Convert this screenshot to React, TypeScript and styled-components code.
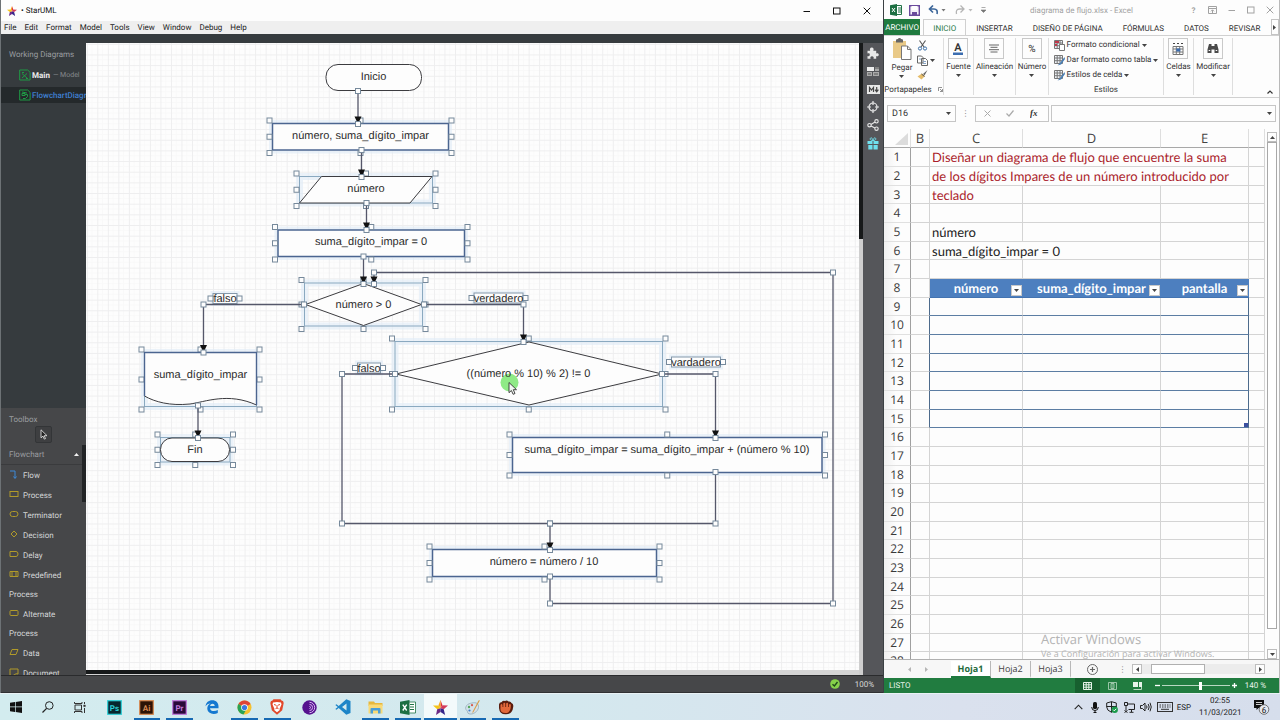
import React from "react";
import styled, { createGlobalStyle } from "styled-components";

const ui = `Roboto, "Open Sans", "Noto Sans", sans-serif`;
const humanist = `"Open Sans", "Noto Sans", sans-serif`;
const calibri = `Lato, "Liberation Sans", sans-serif`;

const GlobalStyle = createGlobalStyle`
  * { box-sizing: border-box; }
  body { margin: 0; font-family: ${ui}; font-size: 8px; color: #333; background: #d8e6ee; text-rendering: geometricPrecision; }
  button, input { font: inherit; color: inherit; text-rendering: inherit; padding: 0; margin: 0; border: 0; background: none; }
  svg { display: block; flex: none; }
  ul { list-style: none; margin: 0; padding: 0; }
`;

const Desktop = styled.div`
  display: grid;
  grid-template-rows: minmax(0, 1fr) 27px;
  height: 100vh;
  min-height: 480px;
`;

const Workspace = styled.main`
  display: grid;
  grid-template-columns: minmax(0, 1fr) 396px;
  min-height: 0;
`;

/* ---------- StarUML ---------- */

const UmlWindow = styled.section`
  display: flex;
  flex-direction: column;
  min-width: 0;
  min-height: 0;
  border-left: 1px solid #6d7275;
  border-right: 1px solid #3b4043;
  background: #363b3e;
`;

const TitleBar = styled.header`
  display: flex;
  align-items: center;
  height: 21px;
  padding: 0 1px 0 6px;
  background: #fdfdfd;
  color: #111;
`;

const TitleText = styled.h1`
  flex: 1;
  margin: 0 0 0 4px;
  font-size: 8px;
  font-weight: 400;
`;

const WindowButton = styled.button`
  display: grid;
  place-items: center;
  width: 30px;
  height: 20px;
`;

const MenuBar = styled.nav`
  display: flex;
  align-items: center;
  gap: 8px;
  height: 13px;
  padding-left: 3px;
  background: #efefef;
  color: #222;
`;

const MenuItem = styled.button`
  line-height: 12px;
`;

const UmlBody = styled.div`
  display: grid;
  grid-template-columns: 85px minmax(0, 1fr) 20px;
  flex: 1;
  min-height: 0;
  padding-top: 9px;
`;

const Sidebar = styled.aside`
  display: flex;
  flex-direction: column;
  min-height: 0;
  overflow: hidden;
  color: #d4d6d8;
`;

const Diagrams = styled.section`
  flex: 1;
  padding-top: 4px;
`;

const PanelTitle = styled.h2<{ $line: number }>`
  margin: 0;
  padding-left: 8px;
  font-size: 8px;
  font-weight: 400;
  line-height: ${(p) => p.$line}px;
  color: #9a9da0;
`;

const DiagramRow = styled.button<{ $active?: boolean }>`
  display: flex;
  align-items: center;
  gap: 1px;
  width: 100%;
  height: 16px;
  margin-top: 4px;
  padding-left: 18px;
  white-space: nowrap;
  font-weight: 500;
  background: ${(p) => (p.$active ? "#24292b" : "transparent")};
  color: ${(p) => (p.$active ? "#3f7fd0" : "#ededed")};

  small { margin-left: 2px; font-size: 7px; font-weight: 400; color: #85898c; }
`;

const Toolbox = styled.section`
  display: flex;
  flex-direction: column;
  height: 267px;
  padding-top: 6px;
  background: #464749;
  overflow: hidden;
`;

const SelectButton = styled.button`
  display: grid;
  place-items: center;
  flex: none;
  width: 17px;
  height: 17px;
  margin: 0 0 2px 34px;
  border: 1px solid #333537;
  border-radius: 2px;
  background: #3e3f41;
`;

const GroupHeader = styled.button`
  display: flex;
  align-items: center;
  justify-content: space-between;
  width: 100%;
  height: 20px;
  padding: 0 3px 0 8px;
  border-bottom: 1px solid #3a3b3d;
  color: #9a9da0;
`;

const ToolScroll = styled.div`
  display: flex;
  flex: 1;
  min-height: 0;
`;

const ToolGroup = styled.div`
  flex: 1;
`;

const ToolList = styled.ul`
  width: 72px;
  padding: 1px 0 0 8px;
`;

const ToolItem = styled.li`
  margin-bottom: 1px;
`;

const Tool = styled.button`
  text-align: left;
  line-height: 19px;

  svg { display: inline-block; margin-right: 4px; vertical-align: -1px; }
`;

const ToolThumb = styled.div`
  width: 4px;
  height: 57px;
  background: #222426;
`;

const CanvasPane = styled.div`
  display: grid;
  grid-template-columns: minmax(0, 1fr) 4px;
  grid-template-rows: minmax(0, 1fr) 5px;
  min-height: 0;
`;

const Canvas = styled.div`
  position: relative;
  overflow: hidden;
  background: #fdfdfd;

  > svg { position: absolute; top: 0; left: 0; }
`;

const VScroll = styled.div`
  grid-row: span 2;
  background: #cfcfcf;
  &::before { content: ""; display: block; height: 31%; background: #17191a; }
`;

const HScroll = styled.div`
  background: #d4d4d4;
  &::before { content: ""; display: block; height: 4px; width: 29%; background: #17191a; }
`;

const RightTools = styled.aside`
  display: flex;
  flex-direction: column;
  align-items: center;
  gap: 4px;
  padding-top: 3px;
  background: #55565a;
`;

const SideButton = styled.button`
  display: grid;
  place-items: center;
  width: 16px;
  height: 14px;
`;

const UmlStatus = styled.footer`
  display: flex;
  align-items: center;
  justify-content: flex-end;
  gap: 15px;
  height: 18px;
  padding-right: 9px;
  border-top: 1px solid #2a2b2d;
  border-bottom: 1px solid #303133;
  background: #464749;
  color: #d8d8d8;
`;

/* ---------- Excel ---------- */

const XlWindow = styled.section`
  display: flex;
  flex-direction: column;
  min-height: 0;
  overflow: hidden;
  border-right: 1px solid #b9b9b9;
  background: #fdfdfd;
`;

const XlTitle = styled.header`
  display: flex;
  align-items: center;
  height: 19px;
  padding: 1px 0 0 6px;
  color: #a2a2a2;
`;

const QuickButton = styled.button<{ $w?: number }>`
  display: grid;
  place-items: center start;
  width: ${(p) => p.$w ?? 19}px;
  height: 16px;
`;

const XlName = styled.h1`
  flex: 1;
  margin: 0;
  padding-right: 10px;
  text-align: center;
  font-size: 8px;
  font-weight: 400;
`;

const XlWinButton = styled.button`
  display: grid;
  place-items: center;
  width: 19px;
  height: 16px;
`;

const TabRow = styled.nav`
  display: flex;
  height: 17px;
  border-bottom: 1px solid #d0d0d0;
  overflow: hidden;
`;

const FileTab = styled.button`
  width: 39px;
  background: #1f7a3f;
  color: #fff;
`;

const RibbonTab = styled.button<{ $active?: boolean }>`
  height: 17px;
  padding: 0 9px;
  white-space: nowrap;
  color: ${(p) => (p.$active ? "#2a7a4b" : "#333")};
  border: 1px solid ${(p) => (p.$active ? "#d0d0d0" : "transparent")};
  border-bottom: 0;
  margin-left: ${(p) => (p.$active ? 3 : 0)}px;
`;

const TabArrow = styled.button`
  display: grid;
  place-items: center;
  width: 9px;
  height: 16px;
  margin-left: auto;
  border: 1px solid #c4c4c4;
`;

const Ribbon = styled.div`
  display: flex;
  height: 62px;
  border-bottom: 1px solid #d0d0d0;
  color: #333;
`;

const RibbonGroup = styled.section<{ $w: number }>`
  display: flex;
  flex-direction: column;
  align-items: center;
  width: ${(p) => p.$w}px;
  margin: 2px 0;
  border-right: 1px solid #dedede;
`;

const GroupTitle = styled.h2`
  display: flex;
  align-items: center;
  justify-content: center;
  gap: 6px;
  margin: auto 0 0;
  font-size: 8px;
  font-weight: 400;
  line-height: 11px;
`;

const GroupBody = styled.div`
  display: flex;
  gap: 5px;
`;

const BigButton = styled.button`
  display: flex;
  flex-direction: column;
  align-items: center;
  line-height: 15px;
`;

const IconBox = styled.span`
  display: grid;
  place-items: center;
  width: 20px;
  height: 21px;
  border: 1px solid #c9c9c9;
`;

const SmallColumn = styled.div`
  display: flex;
  flex-direction: column;
  gap: 3px;
  padding-top: 1px;
`;

const SmallButton = styled.button`
  display: flex;
  align-items: center;
  gap: 2px;
  height: 12px;
  line-height: 12px;
  white-space: nowrap;
`;

const Collapse = styled.button`
  align-self: flex-end;
  margin: 0 6px 3px auto;
`;

const FormulaBar = styled.div`
  display: flex;
  align-items: center;
  height: 31px;
  padding: 0 3px;
`;

const NameBox = styled.label`
  display: flex;
  align-items: center;
  width: 69px;
  height: 17px;
  padding: 0 4px;
  border: 1px solid #c6c6c6;
  font-size: 9px;

  input { flex: 1; min-width: 0; outline: 0; }
`;

const Dots = styled.span`
  width: 19px;
  text-align: center;
  color: #888;
`;

const FormulaTools = styled.div`
  display: flex;
  align-items: center;
  justify-content: space-around;
  width: 74px;
  height: 17px;
  margin-right: 2px;
  border: 1px solid #c6c6c6;
`;

const FormulaInput = styled.label`
  display: flex;
  align-items: center;
  flex: 1;
  height: 17px;
  padding-right: 3px;
  border: 1px solid #c6c6c6;

  input { flex: 1; min-width: 0; outline: 0; }
`;

const SheetArea = styled.div`
  position: relative;
  display: flex;
  flex: 1;
  min-height: 0;
`;

const SheetClip = styled.div`
  width: 381px;
  overflow: hidden;
`;

const Sheet = styled.table`
  width: 100%;
  table-layout: fixed;
  border-collapse: separate;
  border-spacing: 0;
  font-family: ${calibri};
  font-size: 13px;

  tr { height: 19px; }
  tbody tr:nth-child(3n) { height: 18px; }
  th, td { padding: 0; line-height: 16px; }
  thead th {
    border-right: 1px solid #dedede;
    border-bottom: 1px solid #a8a8a8;
    font-family: ${humanist};
    font-weight: 400;
    color: #444;
  }
  tbody th {
    border-right: 1px solid #a0a0a0;
    border-bottom: 1px solid #e0e0e0;
    background: linear-gradient(90deg, #f0f0f0, #fdfdfd 12px);
    font-family: ${humanist};
    font-size: 12px;
    font-weight: 400;
    color: #3a3a3a;
  }
`;

const Cell = styled.td<{ $tone?: "red"; $table?: boolean; $edge?: boolean; $corner?: boolean }>`
  border-right: 1px solid ${(p) => (p.$edge ? "#4d6b8c" : "#d4d4d4")};
  border-bottom: 1px solid ${(p) => (p.$table ? "#5c7da3" : "#d4d4d4")};
  background: ${(p) => (p.$corner ? "linear-gradient(#3a4fa0, #3a4fa0) right bottom / 4px 4px no-repeat" : "none")};
  color: ${(p) => (p.$tone === "red" ? "#ab1d2c" : "#222")};
  white-space: nowrap;
  overflow: hidden;

  > span { padding-left: 2px; }
`;

const HeadCell = styled.td`
  background: #4d7fbf;
  border-bottom: 1px solid #4373b0;
  color: #fff;
  font-weight: 700;
  text-align: center;

  > div { display: flex; align-items: center; justify-content: flex-end; gap: 2px; padding-left: 13px; }
  > div > span { flex: 1; white-space: nowrap; }
`;

const FilterButton = styled.button`
  display: grid;
  place-items: center;
  width: 11px;
  height: 11px;
  margin: 4px 1px 0 0;
  border: 1px solid #c8c8c8;
  background: #fff;
`;

const SheetScroll = styled.div`
  display: flex;
  flex-direction: column;
  flex: 1;
  padding: 3px 1px 0 2px;
`;

const ArrowButton = styled.button`
  display: grid;
  place-items: center;
  width: 10px;
  height: 10px;
  border: 1px solid #bdbdbd;
  background: #fdfdfd;
`;

const VThumb = styled.div`
  width: 10px;
  flex: 1;
  margin-bottom: 20px;
  border: 1px solid #a8a8a8;
  background: #fff;
`;

const Watermark = styled.div`
  position: absolute;
  left: 157px;
  bottom: 0;
  color: #b4b4b4;
  font-family: ${humanist};
  pointer-events: none;

  strong { display: block; font-size: 13px; font-weight: 400; line-height: 18px; }
  span { display: block; font-size: 9px; line-height: 11px; white-space: nowrap; }
`;

const SheetTabs = styled.nav`
  display: flex;
  align-items: center;
  height: 19px;
  padding-right: 14px;
  border-top: 1px solid #b0b0b0;
  background: #f7f7f7;
`;

const SheetNav = styled.div`
  display: flex;
  justify-content: center;
  gap: 14px;
  width: 67px;
  color: #aaa;
`;

const SheetTab = styled.button<{ $active?: boolean }>`
  width: 40px;
  height: 17px;
  font-family: ${humanist};
  font-size: 9px;
  font-weight: ${(p) => (p.$active ? 700 : 400)};
  color: ${(p) => (p.$active ? "#1f6b3d" : "#444")};
  background: ${(p) => (p.$active ? "#fff" : "transparent")};
  border-right: 1px solid #b8b8b8;
  border-bottom: 2px solid ${(p) => (p.$active ? "#1f7a3f" : "transparent")};
`;

const AddSheet = styled.button`
  display: grid;
  place-items: center;
  flex: 1;
`;

const HTrack = styled.div`
  display: flex;
  flex: 0 0 113px;
  height: 10px;
  padding-left: 9px;
  background: #ececec;

  &::before { content: ""; width: 52px; border: 1px solid #b0b0b0; background: #fff; }
`;

const XlStatus = styled.footer`
  display: flex;
  align-items: center;
  height: 15px;
  padding: 0 13px 0 5px;
  background: #217c40;
  color: #e8f3ea;
`;

const StatusText = styled.span`
  flex: 1;
`;

const ViewButton = styled.button<{ $active?: boolean }>`
  display: grid;
  place-items: center;
  width: 25px;
  height: 15px;
  background: ${(p) => (p.$active ? "#17602f" : "transparent")};
`;

const ZoomControl = styled.div`
  display: flex;
  align-items: center;
  margin-left: 4px;
`;

const Zoom = styled.input`
  appearance: none;
  width: 68px;
  height: 10px;
  margin: 0 1px;
  background: linear-gradient(#b9d8c2, #b9d8c2) center / 100% 1px no-repeat;

  &::-webkit-slider-thumb { appearance: none; width: 3px; height: 8px; background: #fff; }
`;

const ZoomValue = styled.output`
  width: 28px;
  text-align: right;
  white-space: nowrap;
`;

/* ---------- Taskbar ---------- */

const TaskBar = styled.footer`
  display: flex;
  justify-content: space-between;
  border-top: 1px solid #e9f2f5;
  background: linear-gradient(90deg, #d3ecef, #d4e8ee 45%, #dae1ee 75%, #d6deec);
  color: #222;
`;

const TaskGroup = styled.div`
  display: flex;
`;

const StartGroup = styled.div`
  display: grid;
  grid-template-columns: repeat(3, 32px);
  margin-right: 2px;
`;

const AppGroup = styled.div`
  display: grid;
  grid-template-columns: repeat(13, minmax(0, 1fr));
  width: 424px;
`;

const TaskButton = styled.button<{ $open?: boolean; $active?: boolean }>`
  position: relative;
  display: grid;
  place-items: center;
  height: 26px;
  background: ${(p) => (p.$active ? "#f3fafb" : "transparent")};
  border: solid transparent;
  border-width: 0 ${(p) => (p.$active ? 0 : 3)}px;
  background-clip: padding-box;

  &::after {
    content: "";
    position: absolute;
    right: 0;
    bottom: 0;
    left: 0;
    height: 2px;
    background: ${(p) => (p.$open ? "#1669b3" : "transparent")};
  }
`;

const Tray = styled.div`
  display: flex;
  align-items: center;
  gap: 4px;
  padding-right: 10px;
`;

const TrayButton = styled.button`
  display: grid;
  place-items: center;
  height: 20px;
  min-width: 13px;
`;

const Clock = styled.button`
  width: 42px;
  margin: 0 8px 0 4px;
  line-height: 12px;
`;

/* ---------- Diagram ---------- */

const Label = styled.text`
  font-family: "Liberation Sans", Arial, sans-serif;
  font-size: 11px;
  fill: #2c2c2c;
  text-anchor: middle;
`;

const T = ({ x, y, children }: { x: number; y: number; children: React.ReactNode }) => (
  <Label x={x} y={y + 4}>{children}</Label>
);

const Handle = ({ x, y }: { x: number; y: number }) => (
  <rect x={x - 2.5} y={y - 2.5} width="5" height="5" fill="#fdfdfd" stroke="#76899b" strokeWidth="1" />
);

type Box = { x: number; y: number; w: number; h: number; mx?: number; solid?: boolean };

const Selection = ({ x, y, w, h, mx, solid }: Box) => {
  const cx = mx ?? x + w / 2;
  const cy = y + h / 2;
  const pts = [
    [x - 3, y - 3], [cx, y - 3], [x + w + 3, y - 3],
    [x - 3, cy], [x + w + 3, cy],
    [x - 3, y + h + 3], [cx, y + h + 3], [x + w + 3, y + h + 3],
  ];
  return (
    <g>
      <rect x={x} y={y} width={w} height={h} fill="none" stroke="#dfebf7" strokeOpacity="0.6" strokeWidth="7" />
      <rect x={x} y={y} width={w} height={h} fill={solid ? "#fdfdfd" : "none"} stroke={solid ? "#4b6590" : "#8aa9c0"} strokeWidth={solid ? 1.5 : 1} />
      {pts.map(([a, b], i) => <Handle key={i} x={a} y={b} />)}
    </g>
  );
};

const Flow = ({ pts, arrow = true }: { pts: [number, number][]; arrow?: boolean }) => {
  const [ex, ey] = pts[pts.length - 1];
  return (
    <g>
      <polyline points={pts.map((p) => p.join(",")).join(" ")} fill="none" stroke="#55576a" strokeWidth="1.3" strokeLinejoin="round" />
      {arrow && <path d={`M${ex - 3.5} ${ey - 7.5}h7L${ex} ${ey}z`} fill="#111" />}
      {pts.map(([a, b], i) => <Handle key={i} x={a} y={b} />)}
    </g>
  );
};

const EdgeLabel = ({ x, y, w, children }: { x: number; y: number; w: number; children: string }) => (
  <g>
    <rect x={x - w / 2} y={y - 5} width={w} height="10" fill="#fdfdfd" stroke="#dfebf7" strokeWidth="5" strokeOpacity="0.6" />
    <rect x={x - w / 2} y={y - 5} width={w} height="10" fill="#fdfdfd" stroke="#8497a9" />
    <Handle x={x - w / 2 - 2.5} y={y} />
    <Handle x={x + w / 2 + 2.5} y={y} />
    <T x={x} y={Math.floor(y)}>{children}</T>
  </g>
);

const ink = { fill: "#fdfdfd", stroke: "#3c3c40", strokeWidth: 1 };

const Flowchart = () => (
  <svg width="773" height="627" viewBox="86 43 773 627" role="img" aria-label="Flowchart">
    <Selection x={272.5} y={123.5} w={176} h={26.5} solid />
    <Selection x={299.5} y={176.5} w={133} h={26.5} />
    <path d="M321.5 176.5H432L410 203H299.5z" {...ink} />
    <Selection x={278} y={230} w={186.5} h={26.5} solid />
    <Selection x={304.5} y={283} w={118} h={43} mx={363.5} />
    <path d="M305.5 304.5 363.5 283.5 421.5 304.5 363.5 325.5z" {...ink} />
    <Selection x={144.5} y={352.5} w={112} h={54} />
    <path d="M144.5 352.5H256.5V405C228 392 205 402 190 404C170 406 155 402 144.5 396z" {...ink} />
    <path d="M144.5 396V352.5H256.5V405" fill="none" stroke="#4b6590" strokeWidth="1.4" />
    <Selection x={160.5} y={437.5} w={69.5} h={24.5} />
    <rect x="160.5" y="438" width="69" height="23.5" rx="11.5" {...ink} />
    <Selection x={395} y={341.5} w={267.5} h={65} />
    <path d="M396 374 529 342 662 374 529 405z" {...ink} />
    <Selection x={512.5} y={437.5} w={309.5} h={35} solid />
    <Selection x={432.5} y={549.5} w={224} h={27} solid />

    <rect x="326" y="64.5" width="95.5" height="26" rx="12" {...ink} />

    <EdgeLabel x={225} y={298.5} w={24}>falso</EdgeLabel>
    <EdgeLabel x={498.5} y={298} w={49}>verdadero</EdgeLabel>
    <EdgeLabel x={369} y={368} w={23}>falso</EdgeLabel>
    <EdgeLabel x={696} y={362} w={49}>vardadero</EdgeLabel>

    <Flow pts={[[358, 91], [358, 124]]} />
    <Flow pts={[[361.5, 150], [361.5, 177]]} />
    <Flow pts={[[366.5, 203], [366.5, 230]]} />
    <Flow pts={[[363.5, 256.5], [363.5, 284]]} />
    <Flow pts={[[304, 304.5], [203.5, 304.5], [203.5, 352.5]]} />
    <Flow pts={[[424, 304.5], [523.5, 304.5], [523.5, 342]]} />
    <Flow pts={[[198, 405.5], [198, 438]]} />
    <Flow pts={[[715.5, 472], [715.5, 523.5], [550, 523.5]]} arrow={false} />
    <Flow pts={[[395, 374], [342, 374], [342, 523.5], [550, 523.5], [550, 550]]} />
    <Flow pts={[[662, 374], [715.5, 374], [715.5, 438]]} />
    <Flow pts={[[550, 576.5], [550, 603.5], [833, 603.5], [833, 272.5], [374, 272.5], [374, 284]]} />

    <T x={373.5} y={76}>Inicio</T>
    <T x={360.5} y={135}>número, suma_dígito_impar</T>
    <T x={366} y={188}>número</T>
    <T x={371} y={241}>suma_dígito_impar = 0</T>
    <T x={363.5} y={304}>número &gt; 0</T>
    <T x={200.5} y={374}>suma_dígito_impar</T>
    <T x={195} y={449}>Fin</T>
    <T x={667} y={449}>suma_dígito_impar = suma_dígito_impar + (número % 10)</T>
    <T x={544} y={561}>número = número / 10</T>
    <circle cx="509.5" cy="382.5" r="9" fill="#8fea86" />
    <T x={528.5} y={373}>((número % 10) % 2) != 0</T>
    <path d="M509 382.5v10.2l2.4-2.2 1.7 3.8 1.9-.8-1.7-3.8h3.2z" fill="#f4f7f4" stroke="#333" strokeWidth="0.9" />
  </svg>
);

const GridLines = () => (
  <svg width="100%" height="100%" aria-hidden="true">
    <defs>
      <pattern id="grid" width="10.52" height="10.66" x="0.8" y="0.8" patternUnits="userSpaceOnUse">
        <path d="M5.3 0v10.66M0 5.3h10.52" stroke="#f9f9f9" fill="none" />
        <path d="M.5 0v10.66M0 .5h10.52" stroke="#eeeeef" fill="none" />
      </pattern>
    </defs>
    <rect width="100%" height="100%" fill="url(#grid)" />
  </svg>
);

/* ---------- Icons ---------- */

const Star = ({ size = 10 }: { size?: number }) => (
  <svg width={size} height={size} viewBox="0 0 20 20">
    <path d="M10 0 12.6 7 10 11z" fill="#e0303a" /><path d="M10 0 7.2 7.2 10 11z" fill="#f6a51c" />
    <path d="M0 7.3 7.2 7.2 10 11 5.6 12.2z" fill="#f5c518" /><path d="M20 7.3 12.6 7 10 11 14.3 12.2z" fill="#d23b5b" />
    <path d="M4 20 5.6 12.2 10 11V16z" fill="#6b2a86" /><path d="M16.2 20 14.3 12.2 10 11V16z" fill="#35268a" />
  </svg>
);

const Caret = ({ up, color = "#444" }: { up?: boolean; color?: string }) => (
  <svg width="5" height="3" viewBox="0 0 5 3"><path d={up ? "M0 3h5L2.5 0z" : "M0 0h5L2.5 3z"} fill={color} /></svg>
);

const SideCaret = ({ left, color = "#444" }: { left?: boolean; color?: string }) => (
  <svg width="3" height="5" viewBox="0 0 3 5"><path d={left ? "M3 0v5L0 2.5z" : "M0 0v5l3-2.5z"} fill={color} /></svg>
);

const WinGlyph = ({ kind }: { kind: "min" | "max" | "close" }) => (
  <svg width="8" height="8" viewBox="0 0 8 8" fill="none" stroke="currentColor">
    {kind === "min" && <path d="M.5 4.5h6.5" />}
    {kind === "max" && <rect x=".5" y="1" width="6.5" height="6" />}
    {kind === "close" && <path d="M.7.7l6.6 6.6M7.3.7.7 7.3" />}
  </svg>
);

const DiagramIcon = ({ flow }: { flow?: boolean }) => (
  <svg width="12" height="12" viewBox="0 0 12 12" fill="none" stroke="#1f9a45">
    <path d="M.7 1h8l2.4 2.4V11H.7z" />
    {flow ? <path d="M3 4.5h3v2H3zM6 5.5h2.5v2L6.5 9.5H4M3 3l5 1" /> : <path d="M3 4.5l5 4.5M8 4.5 3 9M3 3.5h2M7 9.5h2" />}
  </svg>
);

const toolShapes: Record<string, React.ReactNode> = {
  Flow: <path d="M1 1h5v7M4.5 6.5 6 8.5l1.5-2" stroke="#3d8ad8" />,
  Process: <rect x="1" y="1.5" width="8" height="5" />,
  Terminator: <rect x="1" y="1.5" width="8" height="5" rx="2.5" />,
  Decision: <path d="M5 1 8 4 5 7 2 4z" />,
  Delay: <path d="M1 1.500h6q2 0 2 2.500T7 6.500H1z" />,
  "Predefined Process": <path d="M1 1.500h8v5H1zM3 1.500v5M7 1.500v5" />,
  "Alternate Process": <rect x="1" y="1.5" width="8" height="5" rx="1" />,
  Data: <path d="M3 1.500h6L7 6.500H1z" />,
  Document: <path d="M1 1h8v5q-2-1-4 1T1 7z" />,
};

const sideIcons = [
  <svg width="12" height="12" viewBox="0 0 12 12"><path d="M.5 3.8h2.7C2.4 1.8 3.2.4 4.8.4s2.300 1.400 1.500 3.400h2.900v2.600c1.500-.7 2.600.1 2.600 1.400S10.700 9.700 9.200 9v2.700H6.500c.6-1.500 0-2.500-1.500-2.500s-2 1-1.400 2.500H.5V9c1.500.5 2.300-.1 2.300-1.300S1.900 6 .5 6.600z" fill="#e8e8e8" /></svg>,
  <svg width="12" height="9" viewBox="0 0 12 9"><path d="M0 0h7v4H0z" fill="#eee" /><path d="M8 0h4v4H8zM0 5h5v4H0zM6 5h6v4H6z" fill="#aaa" /><path d="M8 1h4M1 7h3M7 7h4" stroke="#555" /></svg>,
  <svg width="13" height="9" viewBox="0 0 13 9"><path d="M0 0h13v9H0z" fill="#e8e8e8" /><path d="M2.500 7V2.500l2 2.500 2-2.500V7M9.700 2v4.500M8 4.700l1.700 2 1.700-2" fill="none" stroke="#444" strokeWidth="1.200" /></svg>,
  <svg width="12" height="12" viewBox="0 0 12 12" fill="none" stroke="#e8e8e8" strokeWidth="1.200"><circle cx="6" cy="6" r="4" /><path d="M6 0v4M6 8v4M0 6h4M8 6h4" /></svg>,
  <svg width="12" height="12" viewBox="0 0 12 12" fill="none" stroke="#e8e8e8" strokeWidth="1.100"><circle cx="2.500" cy="6.200" r="1.700" /><circle cx="9.500" cy="2.300" r="1.700" /><circle cx="9.500" cy="9.700" r="1.700" /><path d="M4 5.400 8 3.100M4 7l4 2" /></svg>,
  <svg width="12" height="13" viewBox="0 0 12 13"><path d="M.5 4h5v3h-5zM6.500 4h5v3h-5zM1.300 8h4.200v4.500H1.300zM6.500 8h4.200v4.500H6.500z" fill="#6fe0ee" /><path d="M6 3.500C2 3.500 3 .5 4.500.9 5.500 1.200 6 3.500 6 3.500S6.500 1.200 7.500.9C9 .5 10 3.500 6 3.500z" fill="none" stroke="#6fe0ee" /></svg>,
];

const StylesIcon = ({ red }: { red?: boolean }) => (
  <svg width="11" height="11" viewBox="0 0 11 11">
    <path d="M.5.5h8v8h-8zM.5 3h8M.5 5.700h8M3.200.5v8M6 .5v8" fill="#eef2f7" stroke="#777" />
    {red ? <><path d="M1 1h4v2H1zM1 4h2v2H1z" fill="#c0384b" /><path d="M5.500 4.500h5v6h-5z" fill="#fff" stroke="#777" /></> : <path d="M10.500 2 6 8 3.500 10.500 7 9.500 11 4z" fill="#4a7fb5" />}
  </svg>
);

const CutIcon = () => (
  <svg width="11" height="11" viewBox="0 0 11 11" fill="none"><path d="M2.500.5 7 7M8.500.5 4 7" stroke="#555" strokeWidth="1.100" /><circle cx="3" cy="8.500" r="1.600" stroke="#3a6ea5" /><circle cx="8" cy="8.500" r="1.600" stroke="#3a6ea5" /></svg>
);
const CopyIcon = () => (
  <svg width="11" height="11" viewBox="0 0 11 11" fill="#fff" stroke="#666"><path d="M.5 1h4L6 2.500V8H.5zM4.500 3.500h4L10.500 5.500v5h-6z" /><path d="M6 6.500h3M6 8.500h3M2 4h2" stroke="#8aa6c6" /></svg>
);
const BrushIcon = () => (
  <svg width="11" height="10" viewBox="0 0 11 10"><path d="M10.500 0 6 4l1.500 1.500z" fill="#666" /><path d="M5 3.500 8 6 4.500 9.500.5 6.500z" fill="#e6bd6a" /><path d="M4.500 4 7.500 6.500" stroke="#555" /></svg>
);

/* ---------- Data ---------- */

const menus = ["File", "Edit", "Format", "Model", "Tools", "View", "Window", "Debug", "Help"];
const ribbonTabs = ["INSERTAR", "DISEÑO DE PÁGINA", "FÓRMULAS", "DATOS", "REVISAR"];

const square = (bg: string, fg: string, label: string) => (
  <svg width="15" height="15" viewBox="0 0 15 15">
    <rect x=".7" y=".7" width="13.600" height="13.600" fill={bg} stroke={fg} strokeWidth="1.200" />
    <text x="7.500" y="10.500" fontSize="8" fontWeight="700" fill={fg} textAnchor="middle">{label}</text>
  </svg>
);

type App = { name: string; icon: React.ReactNode; open?: boolean; active?: boolean };
const apps: App[] = [
  { name: "Photoshop", icon: square("#06262e", "#2fd0d8", "Ps") },
  { name: "Illustrator", open: true, icon: square("#2c1305", "#d98a52", "Ai") },
  { name: "Premiere", open: true, icon: square("#2a0a3a", "#c07bdc", "Pr") },
  { name: "Edge", icon: <svg width="14" height="14" viewBox="0 0 14 14"><path d="M.5 6.300C1 2.500 3.500.3 7.200.3c4 0 6.300 2.700 6.300 6.200v1.700H5c.2 3.300 4.800 3.600 7.800 1.900v2.800C9 15 2.500 14 2.300 8.600 2.200 6.200 3.600 4.300 5.500 3.500 3.300 3.500 1.500 4.600.5 6.300zM5.100 6h4.600c0-3.200-4.300-3-4.600 0z" fill="#1478d0" /></svg> },
  { name: "Chrome", open: true, icon: <svg width="15" height="15" viewBox="0 0 15 15"><circle cx="7.500" cy="7.500" r="7" fill="#f6c12f" /><path d="M7.500 7.500 1.400 4A7 7 0 0 1 13.600 4z" fill="#dd4436" /><path d="M7.500 7.500 1.400 4A7 7 0 0 0 6.500 14.400L9.500 9z" fill="#27a356" /><circle cx="7.500" cy="7.500" r="3.300" fill="#fff" /><circle cx="7.500" cy="7.500" r="2.600" fill="#3b78e0" /></svg> },
  { name: "Brave", open: true, icon: <svg width="14" height="16" viewBox="0 0 14 16"><path d="M3.500.3h7l1.300 1.400 1.200.2.700 2-1.500 7.300L7 15.700l-5.200-4.500L.3 3.900l.7-2 1.200-.2z" fill="#e2482b" /><path d="M3 3.500 7 3l4 .5.500 2-2 4.500.3 1L7 13.200 4.200 11l.3-1-2-4.500z" fill="#fff" /><path d="M4 5.500l2 .7M10 5.500l-2 .7M7 6v3M5.500 9.700 7 9l1.500.7" stroke="#e2482b" fill="none" /></svg> },
  { name: "Tor", icon: <svg width="15" height="15" viewBox="0 0 15 15"><circle cx="7.500" cy="7.500" r="7.200" fill="#56128f" /><path d="M7.500 2.300a5.200 5.200 0 0 1 0 10.400M7.500 4.400a3.100 3.100 0 0 1 0 6.200M7.500 6.500a1 1 0 0 1 0 2" fill="none" stroke="#d9b8f2" strokeWidth="1" /></svg> },
  { name: "Visual Studio Code", icon: <svg width="16" height="16" viewBox="0 0 16 16"><path d="M11.300.3 15.500 2v12l-4.200 1.700L3.700 9 1.500 10.700.3 10l2.500-2L.3 6l1.200-.7L3.700 7zM11.500 4.500 7 8l4.500 3.500z" fill="#1d85c8" fillRule="evenodd" /></svg> },
  { name: "Explorer", open: true, icon: <svg width="15" height="13" viewBox="0 0 15 13"><path d="M.5.500H6L7 2h7.500v3H.5z" fill="#e8b83c" /><path d="M.5 3.500h14v9H.5z" fill="#f9da77" /><path d="M2.500 12.500V8q0-1 1-1h8q1 0 1 1v4.500H10V9.500H5v3z" fill="#4a9ed8" /></svg> },
  { name: "Excel", open: true, icon: <svg width="16" height="15" viewBox="0 0 16 15"><path d="M8 2h7.500v11H8z" fill="#fff" stroke="#217346" strokeWidth=".8" /><path d="M10 4.500h4M10 7h4M10 9.500h4" stroke="#217346" /><path d="M0 1.700 9.500 0v15L0 13.300z" fill="#1d6f42" /><path d="M2.800 4.700 6.700 10.500M6.700 4.700 2.800 10.500" stroke="#fff" strokeWidth="1.400" /></svg> },
  { name: "StarUML", open: true, active: true, icon: <Star size={15} /> },
  { name: "Paint", open: true, icon: <svg width="16" height="15" viewBox="0 0 16 15"><path d="M7 3c4-1 7 .5 6.500 4.500S8 15 4 13.800c-2-.6-1-2.300-2.200-3.300S0 7.700 1.500 5.700 5 3.400 7 3z" fill="#d3e2ea" stroke="#8da5b2" strokeWidth=".7" /><circle cx="4" cy="7" r="1.200" fill="#57a85f" /><circle cx="7" cy="5.200" r="1.100" fill="#d8574a" /><circle cx="4.500" cy="10.500" r="1.100" fill="#4281cc" /><path d="M15 .3 8.500 12 7.500 13.500 7.700 11.500 13.500.5z" fill="#d99b45" /></svg> },
  { name: "Bandicam", open: true, icon: <svg width="16" height="15" viewBox="0 0 16 15"><path d="M1 4.500Q1.500 2 3.500 2.200 5 .3 7 1q2-1 3.500.5 2.300-.5 3 1.500 2.300 1 1.700 4-.7 7-7.200 7.300T1 8z" fill="#5a1d0e" /><path d="M2.500 5q1.200-2 2 0V7h.8V3.500q1.200-1.700 2 0V7h.8V3.500q1.300-1.700 2 0V7h.8V4.500q1.400-1.300 2 .5 0 8-5.500 8T2.500 8z" fill="#e2683a" /></svg> },
];

const Spreadsheet = () => (
  <Sheet>
    <colgroup>
      <col width="27" /><col width="19" /><col width="93" /><col width="138" /><col width="88" /><col />
    </colgroup>
    <thead>
      <tr>
        <th><svg width="26" height="18" viewBox="0 0 26 18"><path d="M24 4v12H11z" fill="#dcdcdc" /></svg></th>
        <th>B</th><th>C</th><th>D</th><th>E</th><th />
      </tr>
    </thead>
    <tbody>
      {Array.from({ length: 28 }, (_, i) => i + 1).map((n) => {
        const table = n >= 9 && n <= 15;
        let cells = <><Cell $table={table} /><Cell $table={table} /><Cell $table={table} $edge={table} $corner={n === 15} /></>;
        if (n === 1) cells = <Cell colSpan={3} $tone="red"><span>Diseñar un diagrama de flujo que encuentre la suma</span></Cell>;
        if (n === 2) cells = <Cell colSpan={3} $tone="red"><span>de los dígitos Impares de un número introducido por</span></Cell>;
        if (n === 3) cells = <><Cell $tone="red"><span>teclado</span></Cell><Cell /><Cell /></>;
        if (n === 5) cells = <><Cell><span>número</span></Cell><Cell /><Cell /></>;
        if (n === 6) cells = <><Cell colSpan={2}><span>suma_dígito_impar = 0</span></Cell><Cell /></>;
        if (n === 8)
          cells = (
            <>
              {["número", "suma_dígito_impar", "pantalla"].map((t) => (
                <HeadCell key={t}><div><span>{t}</span><FilterButton aria-label={`Filtrar ${t}`}><Caret /></FilterButton></div></HeadCell>
              ))}
            </>
          );
        return <tr key={n}><th>{n}</th><Cell $edge={table} />{cells}<Cell /></tr>;
      })}
    </tbody>
  </Sheet>
);

const StarUml = () => (
  <UmlWindow>
    <TitleBar>
      <Star />
      <TitleText>• StarUML</TitleText>
      <WindowButton aria-label="Minimize"><WinGlyph kind="min" /></WindowButton>
      <WindowButton aria-label="Maximize"><WinGlyph kind="max" /></WindowButton>
      <WindowButton aria-label="Close"><WinGlyph kind="close" /></WindowButton>
    </TitleBar>
    <MenuBar>{menus.map((m) => <MenuItem key={m}>{m}</MenuItem>)}</MenuBar>
    <UmlBody>
      <Sidebar>
        <Diagrams>
          <PanelTitle $line={16}>Working Diagrams</PanelTitle>
          <DiagramRow><DiagramIcon /><b>Main</b><small>— Model</small></DiagramRow>
          <DiagramRow $active><DiagramIcon flow /><span>FlowchartDiagram1</span></DiagramRow>
        </Diagrams>
        <Toolbox>
          <PanelTitle $line={12}>Toolbox</PanelTitle>
          <SelectButton aria-label="Select">
            <svg width="8" height="11" viewBox="0 0 8 11"><path d="M1 .8v8l2-1.700 1.300 3 1.200-.5L4.200 6.700H7z" fill="#222" stroke="#ddd" strokeWidth=".9" /></svg>
          </SelectButton>
          <ToolScroll>
            <ToolGroup>
              <GroupHeader>Flowchart<Caret up color="#f2f2f2" /></GroupHeader>
              <ToolList>
                {Object.entries(toolShapes).map(([name, shape]) => (
                  <ToolItem key={name}>
                    <Tool><svg width="10" height="9" viewBox="0 0 10 9" fill="none" stroke="#b09a2a">{shape}</svg>{name}</Tool>
                  </ToolItem>
                ))}
              </ToolList>
            </ToolGroup>
            <ToolThumb />
          </ToolScroll>
        </Toolbox>
      </Sidebar>
      <CanvasPane>
        <Canvas><GridLines /><Flowchart /></Canvas>
        <VScroll />
        <HScroll />
      </CanvasPane>
      <RightTools>
        {["Extensions", "Diagrams", "Markdown", "Target", "Share", "Gift"].map((n, i) => (
          <SideButton key={n} aria-label={n}>{sideIcons[i]}</SideButton>
        ))}
      </RightTools>
    </UmlBody>
    <UmlStatus>
      <svg width="10" height="10" viewBox="0 0 10 10"><circle cx="5" cy="5" r="4.800" fill="#86d14a" /><path d="M2.500 5.200 4.400 7 7.500 3" fill="none" stroke="#1f4a1a" strokeWidth="1.400" /></svg>
      <span>100%</span>
    </UmlStatus>
  </UmlWindow>
);

const Excel = () => (
  <XlWindow>
    <XlTitle>
      <QuickButton aria-label="Excel"><svg width="12" height="12" viewBox="0 0 12 12"><path d="M6 1.500h5.500v9H6z" fill="#fff" stroke="#217346" /><path d="M8 4h3M8 6h3M8 8h3" stroke="#217346" /><path d="M0 1.300 7 0v12L0 10.700z" fill="#1d6f42" /><path d="M2 4l3 4M5 4 2 8" stroke="#fff" /></svg></QuickButton>
      <QuickButton aria-label="Guardar"><svg width="11" height="11" viewBox="0 0 11 11"><path d="M.7.700h9.600v9.600H.7z" fill="#f3eff8" stroke="#6a4a9c" strokeWidth="1.400" /><path d="M2.500 1h6v4h-6z" fill="#fff" /><path d="M3 7h5v3.500H3z" fill="#6a4a9c" /></svg></QuickButton>
      <QuickButton $w={27} aria-label="Deshacer"><svg width="18" height="10" viewBox="0 0 18 10"><path d="M5 .5 1.500 4 5 7.500M2 4h4q4 0 3 5" fill="none" stroke="#3b6599" strokeWidth="1.600" /><path d="M13.500 4h4l-2 2.500z" fill="#777" /></svg></QuickButton>
      <QuickButton $w={26} aria-label="Rehacer"><svg width="18" height="10" viewBox="0 0 18 10"><path d="M5.500.5 9 4 5.500 7.500M8.500 4h-4q-4 0-3 5" fill="none" stroke="#b5b5b5" strokeWidth="1.300" /><path d="M13.500 4h4l-2 2.500z" fill="#bbb" /></svg></QuickButton>
      <QuickButton $w={8} aria-label="Personalizar"><svg width="5" height="6" viewBox="0 0 5 6"><path d="M.5.500h4M0 3h5L2.500 5.500z" fill="#777" stroke="#777" strokeWidth=".6" /></svg></QuickButton>
      <XlName>diagrama de flujo.xlsx - Excel</XlName>
      <XlWinButton aria-label="Ayuda"><b>?</b></XlWinButton>
      <XlWinButton aria-label="Cinta"><svg width="9" height="8" viewBox="0 0 9 8" fill="none" stroke="currentColor"><path d="M.5.500h8v7h-8zM.5 2.500h8M4.500 7V4M3 5.300l1.500-1.500L6 5.300" /></svg></XlWinButton>
      <XlWinButton aria-label="Minimizar"><WinGlyph kind="min" /></XlWinButton>
      <XlWinButton aria-label="Maximizar"><WinGlyph kind="max" /></XlWinButton>
      <XlWinButton aria-label="Cerrar"><WinGlyph kind="close" /></XlWinButton>
    </XlTitle>
    <TabRow>
      <FileTab>ARCHIVO</FileTab>
      <RibbonTab $active>INICIO</RibbonTab>
      {ribbonTabs.map((t) => <RibbonTab key={t}>{t}</RibbonTab>)}
      <TabArrow aria-label="Más"><SideCaret /></TabArrow>
    </TabRow>
    <Ribbon>
      <RibbonGroup $w={60}>
        <GroupBody>
          <BigButton>
            <svg width="20" height="22" viewBox="0 0 20 22"><path d="M1 3h13v17H1z" fill="#e9c987" /><path d="M4 2q0-1 2-1 0-1 1.500-1T9 1q2 0 2 1v2.500H4z" fill="#666" /><path d="M9.500 8h6l3.500 3.500V21.500H9.500z" fill="#fff" stroke="#777" /><path d="M15.500 8v3.500H19" fill="none" stroke="#777" /></svg>
            Pegar<Caret />
          </BigButton>
          <SmallColumn>
            <SmallButton aria-label="Cortar"><CutIcon /></SmallButton>
            <SmallButton aria-label="Copiar"><CopyIcon /><Caret /></SmallButton>
            <SmallButton aria-label="Copiar formato"><BrushIcon /></SmallButton>
          </SmallColumn>
        </GroupBody>
        <GroupTitle>Portapapeles <svg width="5" height="5" viewBox="0 0 5 5"><path d="M.5 4V.5H4M2 2l2.500 2.500M4.500 2v2.500H2" fill="none" stroke="#777" strokeWidth=".8" /></svg></GroupTitle>
      </RibbonGroup>
      <RibbonGroup $w={30}>
        <BigButton><IconBox><svg width="12" height="13" viewBox="0 0 12 13"><text x="6" y="9" fontSize="11" fontWeight="600" textAnchor="middle" fill="#333">A</text><path d="M1 10.500h10v2.500H1z" fill="#3b6db0" /></svg></IconBox>Fuente<Caret /></BigButton>
      </RibbonGroup>
      <RibbonGroup $w={42}>
        <BigButton><IconBox><svg width="10" height="9" viewBox="0 0 10 9"><path d="M0 1h10M1.500 3.300h7M0 5.700h10M1.500 8h7" stroke="#666" /></svg></IconBox>Alineación<Caret /></BigButton>
      </RibbonGroup>
      <RibbonGroup $w={33}>
        <BigButton><IconBox><svg width="14" height="12" viewBox="0 0 14 12"><text x="7" y="9" fontSize="10" textAnchor="middle" fill="#333">%</text></svg></IconBox>Número<Caret /></BigButton>
      </RibbonGroup>
      <RibbonGroup $w={115}>
        <SmallColumn>
          <SmallButton><StylesIcon red />Formato condicional<Caret /></SmallButton>
          <SmallButton><StylesIcon />Dar formato como tabla<Caret /></SmallButton>
          <SmallButton><StylesIcon />Estilos de celda<Caret /></SmallButton>
        </SmallColumn>
        <GroupTitle>Estilos</GroupTitle>
      </RibbonGroup>
      <RibbonGroup $w={30}>
        <BigButton><IconBox><svg width="12" height="12" viewBox="0 0 12 12"><path d="M1 3.500h10v8H1zM1 6h10M1 9h10M4.300 3.500v8M7.700 3.500v8" fill="none" stroke="#777" /><path d="M1 .500h2M5 .500h2M9 .500h2" stroke="#444" /><path d="M4.300 5.500h4v3h-4z" fill="#3b6db0" /></svg></IconBox>Celdas<Caret /></BigButton>
      </RibbonGroup>
      <RibbonGroup $w={39}>
        <BigButton><IconBox><svg width="12" height="11" viewBox="0 0 12 11"><path d="M2 1h2.500v2h3V1H10l1.500 5.500V10H7.500V6.500h-3V10H.5V6.500z" fill="#4a4a4a" /><path d="M1.700 7.500h1.500M8.700 7.500h1.500" stroke="#fff" /></svg></IconBox>Modificar<Caret /></BigButton>
      </RibbonGroup>
      <Collapse aria-label="Contraer"><svg width="6" height="4" viewBox="0 0 6 4"><path d="M.5 3.500 3 1l2.500 2.500" fill="none" stroke="#333" strokeWidth="1.200" /></svg></Collapse>
    </Ribbon>
    <FormulaBar>
      <NameBox><input aria-label="Cuadro de nombres" defaultValue="D16" /><Caret /></NameBox>
      <Dots>⋮</Dots>
      <FormulaTools>
        <button aria-label="Cancelar"><svg width="7" height="7" viewBox="0 0 7 7"><path d="M.5.500l6 6M6.500.500l-6 6" stroke="#aaa" /></svg></button>
        <button aria-label="Introducir"><svg width="8" height="7" viewBox="0 0 8 7"><path d="M.5 3.500 3 6 7.500.5" fill="none" stroke="#aaa" strokeWidth="1.200" /></svg></button>
        <button aria-label="Insertar función"><svg width="10" height="11" viewBox="0 0 10 11"><text x="0" y="8" fontSize="9" fontStyle="italic" fontFamily="Liberation Serif, serif" fontWeight="700" fill="#333">fx</text></svg></button>
      </FormulaTools>
      <FormulaInput><input aria-label="Barra de fórmulas" /><Caret /></FormulaInput>
    </FormulaBar>
    <SheetArea>
      <SheetClip><Spreadsheet /></SheetClip>
      <SheetScroll>
        <ArrowButton aria-label="Subir"><Caret up /></ArrowButton>
        <VThumb />
        <ArrowButton aria-label="Bajar"><Caret /></ArrowButton>
      </SheetScroll>
      <Watermark><strong>Activar Windows</strong><span>Ve a Configuración para activar Windows.</span></Watermark>
    </SheetArea>
    <SheetTabs>
      <SheetNav><SideCaret left color="#b5b5b5" /><SideCaret color="#b5b5b5" /></SheetNav>
      <SheetTab $active>Hoja1</SheetTab>
      <SheetTab>Hoja2</SheetTab>
      <SheetTab>Hoja3</SheetTab>
      <AddSheet aria-label="Hoja nueva"><svg width="11" height="11" viewBox="0 0 11 11" fill="none" stroke="#666"><circle cx="5.500" cy="5.500" r="5" /><path d="M5.500 3v5M3 5.500h5" strokeWidth="1.200" /></svg></AddSheet>
      <Dots>⋮</Dots>
      <ArrowButton aria-label="Izquierda"><SideCaret left /></ArrowButton>
      <HTrack />
      <ArrowButton aria-label="Derecha"><SideCaret /></ArrowButton>
    </SheetTabs>
    <XlStatus>
      <StatusText>LISTO</StatusText>
      <ViewButton $active aria-label="Normal"><svg width="9" height="8" viewBox="0 0 9 8"><path d="M.5.500h8v7h-8zM.5 2.800h8M.5 5.200h8M3.200.500v7M5.800.500v7" fill="none" stroke="#e8f3ea" /></svg></ViewButton>
      <ViewButton aria-label="Diseño de página"><svg width="9" height="8" viewBox="0 0 9 8"><path d="M.5.500h8v7h-8zM3 1.500h3v5H3zM3.500 3h2M3.500 5h2" fill="none" stroke="#b9d8c2" strokeWidth=".8" /></svg></ViewButton>
      <ViewButton aria-label="Saltos de página"><svg width="9" height="8" viewBox="0 0 9 8"><path d="M0 0h5v5H0zM6 0h3v5H6z" fill="#e8f3ea" /><path d="M.5 7.500h8V5" fill="none" stroke="#b9d8c2" /></svg></ViewButton>
      <ZoomControl>
        <button aria-label="Alejar"><svg width="7" height="7" viewBox="0 0 7 7"><path d="M1 3.500h5" stroke="#fff" strokeWidth="1.300" /></svg></button>
        <Zoom type="range" min={0} max={100} defaultValue={57} aria-label="Zoom" />
        <button aria-label="Acercar"><svg width="7" height="7" viewBox="0 0 7 7"><path d="M1 3.500h5M3.500 1v5" stroke="#fff" strokeWidth="1.300" /></svg></button>
      </ZoomControl>
      <ZoomValue>140 %</ZoomValue>
    </XlStatus>
  </XlWindow>
);

export default function App() {
  return (
    <Desktop>
      <GlobalStyle />
      <Workspace>
        <StarUml />
        <Excel />
      </Workspace>
      <TaskBar>
        <TaskGroup>
          <StartGroup>
            <TaskButton aria-label="Inicio"><svg width="12" height="12" viewBox="0 0 12 12"><path d="M0 1.700 5 1v4.600H0zM5.700.900 12 0v5.600H5.700zM0 6.300h5V11L0 10.300zM5.700 6.300H12V12l-6.300-.9z" fill="#111" /></svg></TaskButton>
            <TaskButton aria-label="Buscar"><svg width="12" height="12" viewBox="0 0 12 12" fill="none" stroke="#222"><circle cx="7.300" cy="4.500" r="3.800" /><path d="M4.600 7.300.5 11.500" strokeWidth="1.200" /></svg></TaskButton>
            <TaskButton aria-label="Vista de tareas"><svg width="12" height="11" viewBox="0 0 12 11" fill="none" stroke="#333"><path d="M1 3h6.500v5H1zM.5 0v1.500H8V0M.5 11V9.500H8V11M10.500 0v2M10.500 6v5" /><path d="M9.700 3h1.600v1.600H9.700z" fill="#333" strokeWidth=".5" /></svg></TaskButton>
          </StartGroup>
          <AppGroup>
            {apps.map((a) => <TaskButton key={a.name} aria-label={a.name} $open={a.open} $active={a.active}>{a.icon}</TaskButton>)}
          </AppGroup>
        </TaskGroup>
        <Tray>
          <TrayButton aria-label="Mostrar ocultos"><svg width="9" height="6" viewBox="0 0 9 6"><path d="M.7 5.200 4.500 1.200 8.300 5.200" fill="none" stroke="#222" strokeWidth="1.100" /></svg></TrayButton>
          <TrayButton aria-label="Micrófono"><svg width="8" height="11" viewBox="0 0 8 11"><rect x="2" y="0" width="4" height="7" rx="1.500" fill="#111" /><path d="M.7 5q0 3.500 3.300 3.500T7.300 5M4 8.500V11M2.500 10.500h3" fill="none" stroke="#111" /></svg></TrayButton>
          <TrayButton aria-label="Seguridad"><svg width="12" height="12" viewBox="0 0 12 12"><path d="M5.500.700 10.300 2v4q0 3.500-4.800 5.300Q.700 9.500.7 6V2zM5.500.7v10.500M.7 5.500h9.600" fill="none" stroke="#222" /><circle cx="8.700" cy="8.700" r="3.200" fill="#1c9a4b" /><path d="M7.200 8.700l1.100 1.100 2-2" fill="none" stroke="#fff" /></svg></TrayButton>
          <TrayButton aria-label="Red"><svg width="11" height="11" viewBox="0 0 11 11" fill="none" stroke="#222"><path d="M3.500 2h7v5.500h-6M7.500 7.500v2.500M5.500 10.300h4M.5.500h3v3h-3zM2 3.500v5M.5 8.500l3 2M3.500 8.500l-3 2" /></svg></TrayButton>
          <TrayButton aria-label="Volumen"><svg width="12" height="10" viewBox="0 0 12 10" fill="none" stroke="#222"><path d="M.5 3.500h2L5 1v8L2.500 6.500h-2zM6.500 3.500q1 1.500 0 3M8.200 2q2 3 0 6M10 .700q2.500 4.300 0 8.600" /></svg></TrayButton>
          <TrayButton aria-label="Teclado"><svg width="16" height="10" viewBox="0 0 16 10" fill="none" stroke="#333"><rect x=".5" y=".5" width="15" height="9" /><path d="M2.500 3h11M2.500 5h11" strokeDasharray="1.500 1" /><path d="M4 7.300h8" /></svg></TrayButton>
          <TrayButton><span>ESP</span></TrayButton>
          <Clock>02:55<br />11/03/2021</Clock>
          <TrayButton aria-label="Notificaciones"><svg width="17" height="16" viewBox="0 0 17 16"><path d="M1 1h10v8H5.500L3.500 11V9H1z" fill="#111" /><path d="M3 3.500h6M3 5.500h6" stroke="#fff" strokeWidth=".8" /><circle cx="11" cy="10.500" r="4.800" fill="#e6e9ef" stroke="#555" strokeWidth=".8" /><text x="11" y="13.500" fontSize="8" textAnchor="middle" fill="#111">6</text></svg></TrayButton>
        </Tray>
      </TaskBar>
    </Desktop>
  );
}
